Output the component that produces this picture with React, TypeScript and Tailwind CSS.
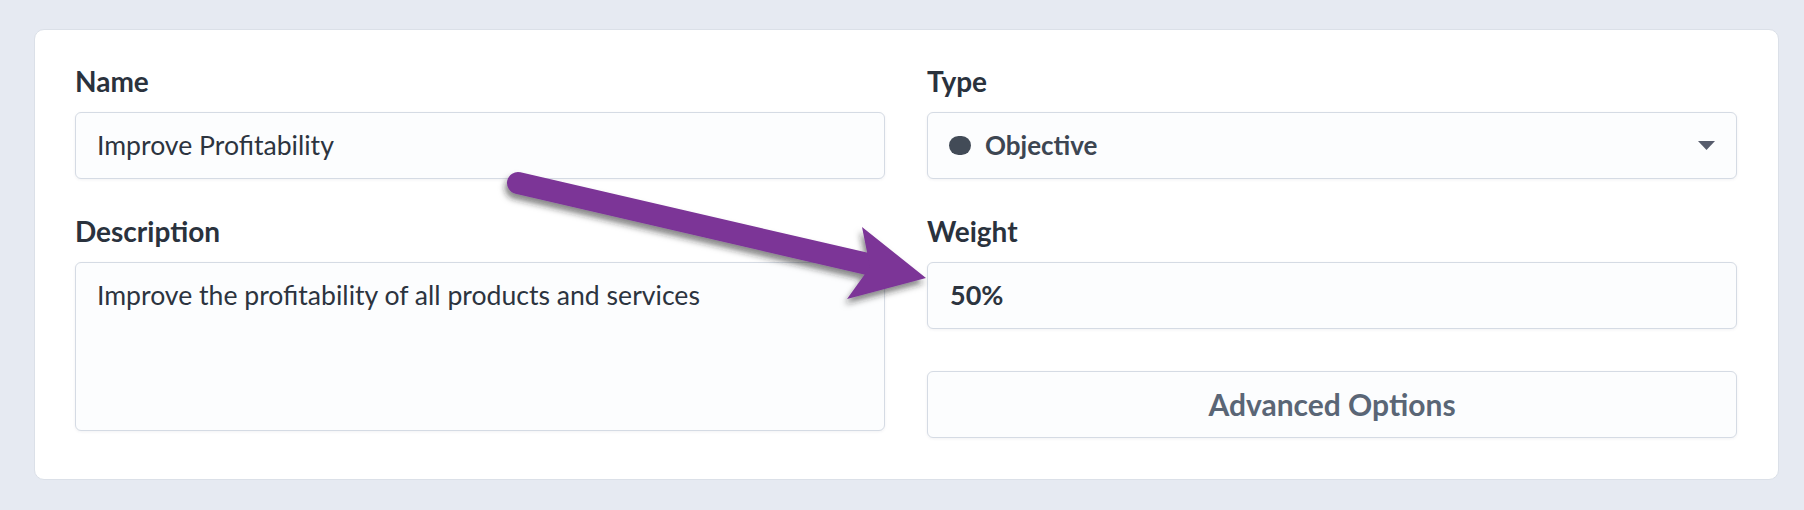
const font = { fontFamily: 'Lato, "Liberation Sans", sans-serif' };

function FieldLabel({ children, className = '' }: { children: React.ReactNode; className?: string }) {
  return (
    <div className={`h-[34px] text-[28px] leading-[34px] font-bold text-[#2a323d] mb-[14px] ${className}`}>
      {children}
    </div>
  );
}

const boxBase =
  'rounded-[6px] border border-[#d5dbe4] bg-[#fcfdfe] shadow-[0_1px_3px_rgba(30,40,60,0.06)]';

function Arrow() {
  return (
    <svg
      className="pointer-events-none absolute left-0 top-0"
      width="1804"
      height="510"
      viewBox="0 0 1804 510"
    >
      <defs>
        <filter id="arrowShadow" x="-10%" y="-30%" width="120%" height="160%">
          <feDropShadow dx="-2" dy="5" stdDeviation="3" floodColor="#1c1c24" floodOpacity="0.55" />
        </filter>
      </defs>
      <g filter="url(#arrowShadow)" fill="#7b3597">
        <line x1="518" y1="183" x2="872" y2="265" stroke="#7b3597" strokeWidth="22" strokeLinecap="round" />
        <polygon points="862,227 926,278 847,299 870,267" />
      </g>
    </svg>
  );
}

export default function App() {
  return (
    <div className="relative h-[510px] w-full bg-[#e6eaf2] pl-[34px] pr-[25px] pt-[29px]" style={font}>
      <div className="rounded-[10px] border border-[#dbe0e8] bg-white px-[40px] pr-[41px] pt-[34px] pb-[41px]">
        <div className="grid grid-cols-2 items-start gap-x-[42px]">
          {/* left column */}
          <div>
            <FieldLabel>Name</FieldLabel>
            <div className={`${boxBase} flex h-[67px] items-center px-[21px] text-[26.6px] text-[#2c343f]`}>
              Improve Profitability
            </div>
            <FieldLabel className="mt-[35px]">Description</FieldLabel>
            <div className={`${boxBase} h-[169px] px-[21px] pt-[15px] text-[26.6px] leading-[35px] text-[#2c343f]`}>
              Improve the profitability of all products and services
            </div>
          </div>

          {/* right column */}
          <div>
            <FieldLabel>Type</FieldLabel>
            <div className={`${boxBase} flex h-[67px] items-center justify-between px-[21px]`}>
              <div className="flex items-center gap-[14px]">
                <span className="inline-block h-[19px] w-[22px] rounded-full bg-[#424b57]" />
                <span className="text-[26px] font-bold text-[#3d4652]">Objective</span>
              </div>
              <svg width="17" height="9" viewBox="0 0 17 9">
                <polygon points="0,0 17,0 8.5,9" fill="#565c6c" />
              </svg>
            </div>
            <FieldLabel className="mt-[35px]">Weight</FieldLabel>
            <div className={`${boxBase} flex h-[67px] items-center px-[22px] text-[27px] font-bold text-[#2c343f]`}>
              50%
            </div>
            <button
              className={`${boxBase} mt-[42px] flex h-[67px] w-full items-center justify-center text-[30px] font-bold text-[#5a6676]`}
            >
              Advanced Options
            </button>
          </div>
        </div>
      </div>
      <Arrow />
    </div>
  );
}
